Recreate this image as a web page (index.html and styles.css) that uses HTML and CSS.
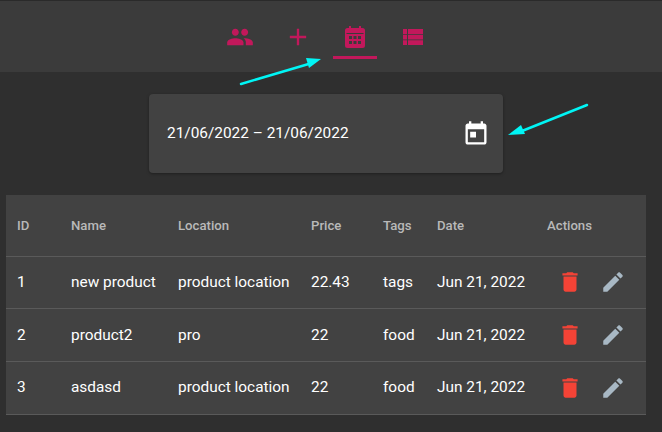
FILE: index.html
```html
<!DOCTYPE html>
<html lang="en">
<head>
    <meta charset="UTF-8">
    <meta name="viewport" content="width=device-width, initial-scale=1.0">
    <title>Products</title>
    <link rel="stylesheet" href="styles.css">
</head>
<body>
    <header class="topbar">
        <nav class="tabs">
            <a class="tab">
                <svg viewBox="0 0 24 24" width="28" height="28"><path d="M16 11c1.660 0 2.990-1.340 2.990-3S17.660 5 16 5s-3 1.340-3 3 1.340 3 3 3zm-8 0c1.660 0 2.990-1.340 2.990-3S9.660 5 8 5 5 6.340 5 8s1.340 3 3 3zm0 2c-2.330 0-7 1.170-7 3.500V19h14v-2.500c0-2.330-4.670-3.500-7-3.500zm8 0c-.29 0-.62.02-.97.05 1.160.84 1.970 1.970 1.970 3.450V19h6v-2.500c0-2.330-4.670-3.500-7-3.500z"/></svg>
            </a>
            <a class="tab">
                <svg viewBox="0 0 24 24" width="28" height="28"><path d="M19 13h-6v6h-2v-6H5v-2h6V5h2v6h6v2z"/></svg>
            </a>
            <a class="tab tab-active">
                <svg viewBox="0 0 24 24" width="24" height="24"><path fill-rule="evenodd" d="M6 1h2v2h8V1h2v2h1.500A2.500 2.500 0 0 1 22 5.500v15a2.500 2.500 0 0 1-2.500 2.500h-15A2.500 2.500 0 0 1 2 20.500v-15A2.500 2.500 0 0 1 4.500 3H6V1zM3.500 8v1h17V8h-17zM6 11v3h3v-3H6zm4.500 0v3h3v-3h-3zm4.500 0v3h3v-3h-3zM6 16v3h3v-3H6zm4.500 0v3h3v-3h-3zm4.500 0v3h3v-3h-3z"/></svg>
            </a>
            <a class="tab">
                <svg viewBox="0 0 24 24" width="24" height="24"><path d="M2 4h4v5.200H2zM7 4h15v5.200H7zM2 10h4v4.400H2zM7 10h15v4.400H7zM2 15.200h4V20H2zM7 15.200h15V20H7z"/></svg>
            </a>
        </nav>
    </header>

    <section class="picker-row">
        <div class="picker">
            <span class="picker-value">21/06/2022 – 21/06/2022</span>
            <svg viewBox="0 0 24 24" width="28" height="28"><path d="M19 3h-1V1h-2v2H8V1H6v2H5c-1.110 0-1.990.9-1.990 2L3 19c0 1.100.89 2 2 2h14c1.100 0 2-.9 2-2V5c0-1.100-.9-2-2-2zm0 16H5V8h14v11zM7 10h5v5H7z"/></svg>
        </div>
    </section>

    <table class="products">
        <thead>
            <tr>
                <th class="col-id">ID</th>
                <th class="col-name">Name</th>
                <th class="col-location">Location</th>
                <th class="col-price">Price</th>
                <th class="col-tags">Tags</th>
                <th class="col-date">Date</th>
                <th>Actions</th>
            </tr>
        </thead>
        <tbody>
            <tr>
                <td>1</td>
                <td>new product</td>
                <td>product location</td>
                <td>22.43</td>
                <td>tags</td>
                <td>Jun 21, 2022</td>
                <td>
                    <div class="actions">
                        <svg class="icon-delete" viewBox="0 0 24 24" width="26" height="26"><path d="M6 19c0 1.100.9 2 2 2h8c1.100 0 2-.9 2-2V7H6v12zM19 4h-3.500l-1-1h-5l-1 1H5v2h14V4z"/></svg>
                        <svg class="icon-edit" viewBox="0 0 24 24" width="26" height="26"><path d="M3 17.250V21h3.750L17.810 9.940l-3.750-3.750L3 17.250zM20.710 7.040c.39-.39.39-1.020 0-1.410l-2.340-2.340c-.39-.39-1.020-.39-1.410 0l-1.830 1.830 3.750 3.750 1.830-1.830z"/></svg>
                    </div>
                </td>
            </tr>
            <tr>
                <td>2</td>
                <td>product2</td>
                <td>pro</td>
                <td>22</td>
                <td>food</td>
                <td>Jun 21, 2022</td>
                <td>
                    <div class="actions">
                        <svg class="icon-delete" viewBox="0 0 24 24" width="26" height="26"><path d="M6 19c0 1.100.9 2 2 2h8c1.100 0 2-.9 2-2V7H6v12zM19 4h-3.500l-1-1h-5l-1 1H5v2h14V4z"/></svg>
                        <svg class="icon-edit" viewBox="0 0 24 24" width="26" height="26"><path d="M3 17.250V21h3.750L17.810 9.940l-3.750-3.750L3 17.250zM20.710 7.040c.39-.39.39-1.020 0-1.410l-2.340-2.340c-.39-.39-1.020-.39-1.410 0l-1.830 1.830 3.750 3.750 1.830-1.830z"/></svg>
                    </div>
                </td>
            </tr>
            <tr>
                <td>3</td>
                <td>asdasd</td>
                <td>product location</td>
                <td>22</td>
                <td>food</td>
                <td>Jun 21, 2022</td>
                <td>
                    <div class="actions">
                        <svg class="icon-delete" viewBox="0 0 24 24" width="26" height="26"><path d="M6 19c0 1.100.9 2 2 2h8c1.100 0 2-.9 2-2V7H6v12zM19 4h-3.500l-1-1h-5l-1 1H5v2h14V4z"/></svg>
                        <svg class="icon-edit" viewBox="0 0 24 24" width="26" height="26"><path d="M3 17.250V21h3.750L17.810 9.940l-3.750-3.750L3 17.250zM20.710 7.040c.39-.39.39-1.020 0-1.410l-2.340-2.340c-.39-.39-1.020-.39-1.410 0l-1.830 1.830 3.750 3.750 1.830-1.830z"/></svg>
                    </div>
                </td>
            </tr>
        </tbody>
    </table>

    <!-- annotation arrows drawn over the screenshot -->
    <svg class="arrows" viewBox="0 0 662 432" width="662" height="432">
        <line x1="241" y1="84" x2="312" y2="63" stroke="#00f5f5" stroke-width="2.500" stroke-linecap="round"/>
        <polygon points="321,59 306,58 309,68" fill="#00f5f5"/>
        <line x1="587" y1="105" x2="522" y2="131" stroke="#00f5f5" stroke-width="2.500" stroke-linecap="round"/>
        <polygon points="508,135 521,125 525,134" fill="#00f5f5"/>
    </svg>
</body>
</html>
```

FILE: styles.css
```css
body {
    margin: 0;
    height: 432px;
    overflow: hidden;
    position: relative;
    background: #2f2f2f;
    color: #fff;
    font-family: Roboto, sans-serif;
    font-size: 15.4px;
}
.topbar {
    height: 72px;
    box-sizing: border-box;
    background: #3b3b3b;
    border-top: 1px solid #2a2a2a;
}
.tabs {
    display: flex;
    justify-content: center;
    padding-right: 9px;
}
.tab {
    flex: none;
    width: 57.5px;
    height: 58px;
    box-sizing: border-box;
    padding-top: 17px;
    display: flex;
    align-items: center;
    justify-content: center;
    fill: #c2185b;
    border-bottom: 3px solid transparent;
}
.tab-active {
    width: 44px;
    margin: 0 6.75px;
    border-bottom-color: #c2185b;
}
.picker-row {
    padding: 22px 0 22px 149px;
}
.picker {
    width: 354px;
    height: 79px;
    box-sizing: border-box;
    padding: 0 13px 0 18px;
    display: flex;
    align-items: center;
    justify-content: space-between;
    background: #424242;
    border-radius: 4px;
    box-shadow: 0 1px 3px rgba(0, 0, 0, 0.35);
    fill: #fff;
}
.picker-value {
    padding-bottom: 2px;
}
.products {
    width: 640px;
    margin-left: 6px;
    border-collapse: collapse;
    table-layout: fixed;
    background: #424242;
}
.products th, .products td {
    box-sizing: border-box;
    padding: 0 0 0 11px;
    text-align: left;
    border-bottom: 1px solid #5a5a5a;
    white-space: nowrap;
}
.products th {
    height: 61px;
    font-size: 13.2px;
    font-weight: 500;
    color: #b9b9b9;
}
.products td {
    height: 52.8px;
    padding-bottom: 1px;
}
.col-id { width: 54px; }
.col-name { width: 107px; }
.col-location { width: 133px; }
.col-price { width: 72px; }
.col-tags { width: 54px; }
.col-date { width: 110px; }
.actions {
    display: flex;
    gap: 17.5px;
    align-items: center;
    padding: 1px 0 0 9.5px;
}
.icon-delete, .icon-edit {
    flex: none;
}
.icon-delete {
    fill: #f44336;
}
.icon-edit {
    fill: #a8b8c4;
}
.arrows {
    position: absolute;
    top: 0;
    left: 0;
    pointer-events: none;
}
```
